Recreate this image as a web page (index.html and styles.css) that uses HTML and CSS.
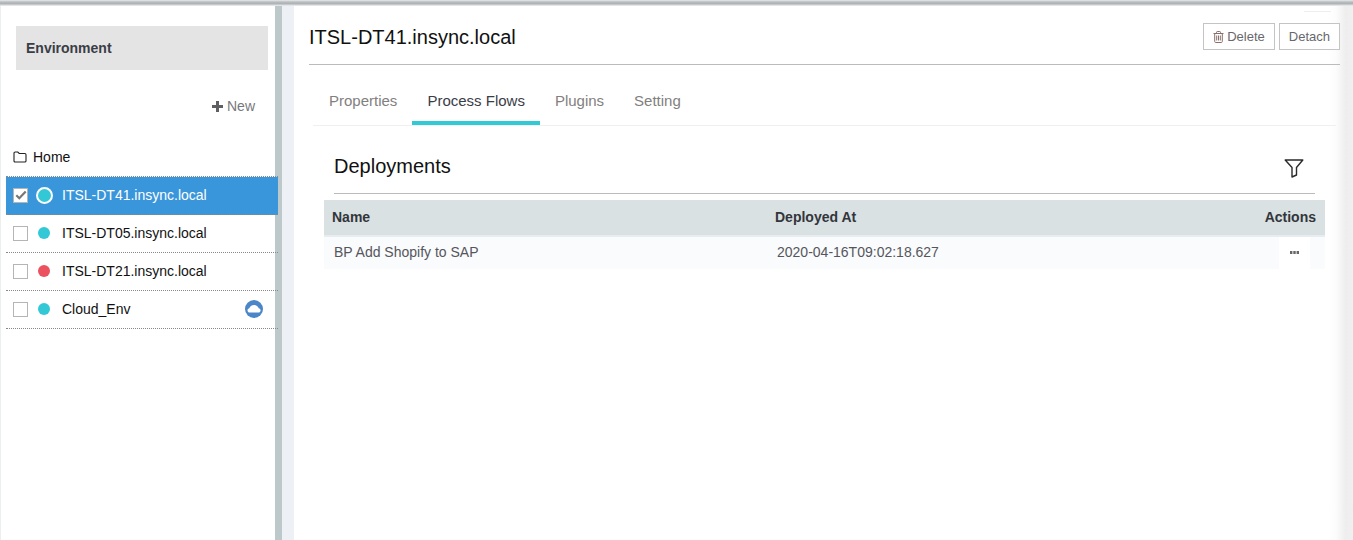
FILE: index.html
```html
<!DOCTYPE html>
<html lang="en">
<head>
<meta charset="UTF-8">
<title>Environment</title>
<link rel="stylesheet" href="styles.css">
</head>
<body>
<div class="topbar"></div>
<div class="page">
	<aside class="sidebar">
		<div class="env-title">Environment</div>
		<div class="new-row">
			<a class="new-link">
				<svg width="11" height="11" viewBox="0 0 11 11"><path d="M4 0h3v4h4v3H7v4H4V7H0V4h4z" fill="#5f5f63"/></svg>
				New
			</a>
		</div>
		<div class="home-row">
			<svg width="14" height="12" viewBox="0 0 14 12"><path d="M1 10V2.200C1 1.500 1.500 1 2.200 1h2.600l1.400 1.500h5.600c.7 0 1.200.5 1.200 1.200V10c0 .6-.5 1-1.200 1H2.200C1.500 11 1 10.600 1 10z" fill="none" stroke="#222" stroke-width="1.100"/></svg>
			Home
		</div>
		<ul class="env-list">
			<li class="env-item active">
				<span class="check checked">
					<svg width="12" height="10" viewBox="0 0 12 10"><path d="M1.300 5.200l3 3L10.700 1.500" fill="none" stroke="#777" stroke-width="2.200"/></svg>
				</span>
				<span class="dot ring"></span>
				<span class="env-name">ITSL-DT41.insync.local</span>
			</li>
			<li class="env-item">
				<span class="check"></span>
				<span class="dot"></span>
				<span class="env-name">ITSL-DT05.insync.local</span>
			</li>
			<li class="env-item">
				<span class="check"></span>
				<span class="dot red"></span>
				<span class="env-name">ITSL-DT21.insync.local</span>
			</li>
			<li class="env-item">
				<span class="check"></span>
				<span class="dot"></span>
				<span class="env-name">Cloud_Env</span>
				<svg class="cloud" width="18" height="18" viewBox="0 0 18 18">
					<circle cx="9" cy="9" r="9" fill="#4a86c8"/>
					<path d="M4.800 12.500c-1.300 0-2.300-.9-2.300-2.100 0-1.100.8-1.900 1.900-2.100C4.800 6.300 6.700 5 9 5c2.300 0 4.200 1.300 4.700 3.300 1.100.2 1.900 1 1.900 2.100 0 1.200-1 2.100-2.300 2.100z" fill="#fff"/>
				</svg>
			</li>
		</ul>
	</aside>
	<div class="gutter"></div>
	<main class="main">
		<span class="stray-line"></span>
		<header class="main-head">
			<h1>ITSL-DT41.insync.local</h1>
			<div class="head-btns">
				<button class="btn">
					<svg width="11" height="12" viewBox="0 0 11 12"><path d="M.5 2.500h10M3.500 2.500V1.300c0-.4.300-.8.700-.8h2.600c.4 0 .7.400.7.800v1.200M1.700 2.500v8c0 .6.400 1 .9 1h5.800c.5 0 .9-.4.900-1v-8M3.700 4.500v5M5.500 4.500v5M7.300 4.500v5" fill="none" stroke="#8a6f6a" stroke-width="1"/></svg>
					Delete
				</button>
				<button class="btn">Detach</button>
			</div>
		</header>
		<nav class="tabs">
			<a class="tab">Properties</a>
			<a class="tab current">Process Flows</a>
			<a class="tab">Plugins</a>
			<a class="tab">Setting</a>
		</nav>
		<section class="deploy">
			<div class="deploy-head">
				<h2>Deployments</h2>
				<svg class="filter" width="20" height="20" viewBox="0 0 20 20"><path d="M1.200 2h17.600l-6.300 7.500V17l-4.500 2V9.500z" fill="none" stroke="#2a2a2a" stroke-width="1.400" stroke-linejoin="round"/></svg>
			</div>
			<div class="table">
				<div class="tr th">
					<span class="col-name">Name</span>
					<span class="col-date">Deployed At</span>
					<span class="col-actions">Actions</span>
				</div>
				<div class="tr td">
					<span class="col-name">BP Add Shopify to SAP</span>
					<span class="col-date">2020-04-16T09:02:18.627</span>
					<span class="col-actions">
						<span class="more"><svg width="9" height="3" viewBox="0 0 9 3"><path d="M0 0h2.400v3H0zM3.300 0h2.400v3H3.300zM6.600 0H9v3H6.600z" fill="#666"/></svg></span>
					</span>
				</div>
			</div>
		</section>
	</main>
	<div class="edge"></div>
</div>
</body>
</html>
```

FILE: styles.css
```css
html, body {
	margin: 0;
	height: 540px;
	overflow: hidden;
	background: #fff;
	font-family: "Liberation Sans", Arial, sans-serif;
	font-size: 14px;
}
.topbar {
	height: 6px;
	background: linear-gradient(to bottom, #e8eaeb 0, #b8bcbf 35%, #aeb3b6 60%, #d5d8da 85%, #f4f5f5 100%);
}
.page {
	display: flex;
	height: 534px;
}

/* left panel */
.sidebar {
	width: 275px;
	flex: none;
	box-sizing: border-box;
	padding-left: 5px;
	border-left: 1px solid #eceef0;
	position: relative;
	z-index: 1;
}
.env-title {
	margin: 20px 7px 0 10px;
	height: 44px;
	line-height: 44px;
	background: #e4e4e4;
	padding-left: 10px;
	font-weight: bold;
	font-size: 14px;
	color: #3a3d46;
}
.new-row {
	display: flex;
	justify-content: flex-end;
	margin-top: 28px;
	padding-right: 20px;
	height: 16px;
	line-height: 16px;
}
.new-link {
	color: #77787c;
	display: flex;
	align-items: center;
	gap: 4px;
}
.home-row {
	display: flex;
	align-items: center;
	gap: 6px;
	margin: 35px 0 0 7px;
	height: 16px;
	color: #111;
}
.env-list {
	list-style: none;
	margin: 11px -3px 0 0;
	padding: 0;
	border-top: 1px dotted #888;
}
.env-item {
	display: flex;
	align-items: center;
	height: 36px;
	padding-bottom: 1px;
	border-bottom: 1px dotted #888;
	color: #111;
}
.env-item.active {
	background: #3a96db;
	color: #fff;
}
.check {
	width: 13px;
	height: 13px;
	margin-left: 7px;
	border: 1px solid #b5b5b5;
	background: #fff;
	display: flex;
	align-items: center;
	justify-content: center;
}
.dot {
	width: 12px;
	height: 12px;
	margin: 0 12px 0 10px;
	border-radius: 50%;
	background: #33c8d6;
}
.dot.red {
	background: #ec5160;
}
.dot.ring {
	width: 13px;
	height: 13px;
	border: 2px solid #fff;
	margin: 0 9px 0 8px;
}
.cloud {
	margin-left: auto;
	margin-right: 15px;
}

.gutter {
	width: 7px;
	flex: none;
	background: #bcc8c9;
}

/* main panel */
.main {
	flex: none;
	width: 1058px;
	box-sizing: border-box;
	padding: 0 0 0 27px;
	position: relative;
	background: linear-gradient(to right, #edf0f4 12px, #fff 12px, #fff 1046px, #fcfcfc 1054px, #f6f6f6 100%);
}
.stray-line {
	position: absolute;
	top: 5px;
	left: 1022px;
	width: 27px;
	height: 1px;
	background: #eeeeee;
}
.main-head {
	display: flex;
	justify-content: space-between;
	align-items: center;
	height: 58px;
	border-bottom: 1px solid #bbb;
}
.main-head h1 {
	margin: 5px 0 0;
	font-size: 20px;
	font-weight: normal;
	color: #111;
}
.head-btns {
	display: flex;
	gap: 4px;
	margin-top: 3px;
}
.btn {
	height: 27px;
	padding: 0 9px;
	border: 1px solid #c4c4c4;
	background: #fff;
	color: #67676d;
	font-family: inherit;
	font-size: 13px;
	display: flex;
	align-items: center;
	gap: 3px;
}
.tabs {
	display: flex;
	margin: 15px 4px 0 4px;
	padding-left: 1px;
	height: 45px;
	border-bottom: 1px solid #f0f0f0;
}
.tab {
	padding: 12px 15px 0;
	color: #82807e;
	font-size: 15px;
	box-sizing: border-box;
	height: 45px;
}
.tab.current {
	color: #3a3d46;
	border-bottom: 4px solid #33c8d6;
}
.deploy {
	margin: 0 15px;
}
.deploy-head {
	display: flex;
	justify-content: space-between;
	align-items: center;
	margin: 0 10px;
	height: 54px;
	padding: 13px 11px 0 0;
	border-bottom: 1px solid #bbb;
}
.deploy-head h2 {
	margin: 0;
	font-size: 20px;
	font-weight: normal;
	color: #111;
}
.filter {
	margin-top: 4px;
}
.table {
	margin-top: 6px;
}
.tr {
	display: flex;
	align-items: center;
}
.th {
	height: 34px;
	padding: 0 9px 1px 8px;
	background: #d9e1e2;
	border-bottom: 2px solid #e6ecef;
	font-weight: bold;
	color: #33353c;
}
.td {
	height: 32px;
	background: #fafbfd;
	color: #55565c;
	padding: 0 15px 0 10px;
}
.td .col-name, .td .col-date {
	margin-bottom: 2px;
}
.col-name {
	width: 443px;
}
.col-date {
	flex: 1;
}
.col-actions {
	text-align: right;
}
.more {
	display: flex;
	align-items: center;
	justify-content: center;
	width: 31px;
	height: 32px;
	padding-bottom: 2px;
	box-sizing: border-box;
	background: #fff;
}
.edge {
	flex: none;
	width: 13px;
	background: linear-gradient(to right, #f6f6f6, #eeeeee 40%, #f0f0f0);
}
```
